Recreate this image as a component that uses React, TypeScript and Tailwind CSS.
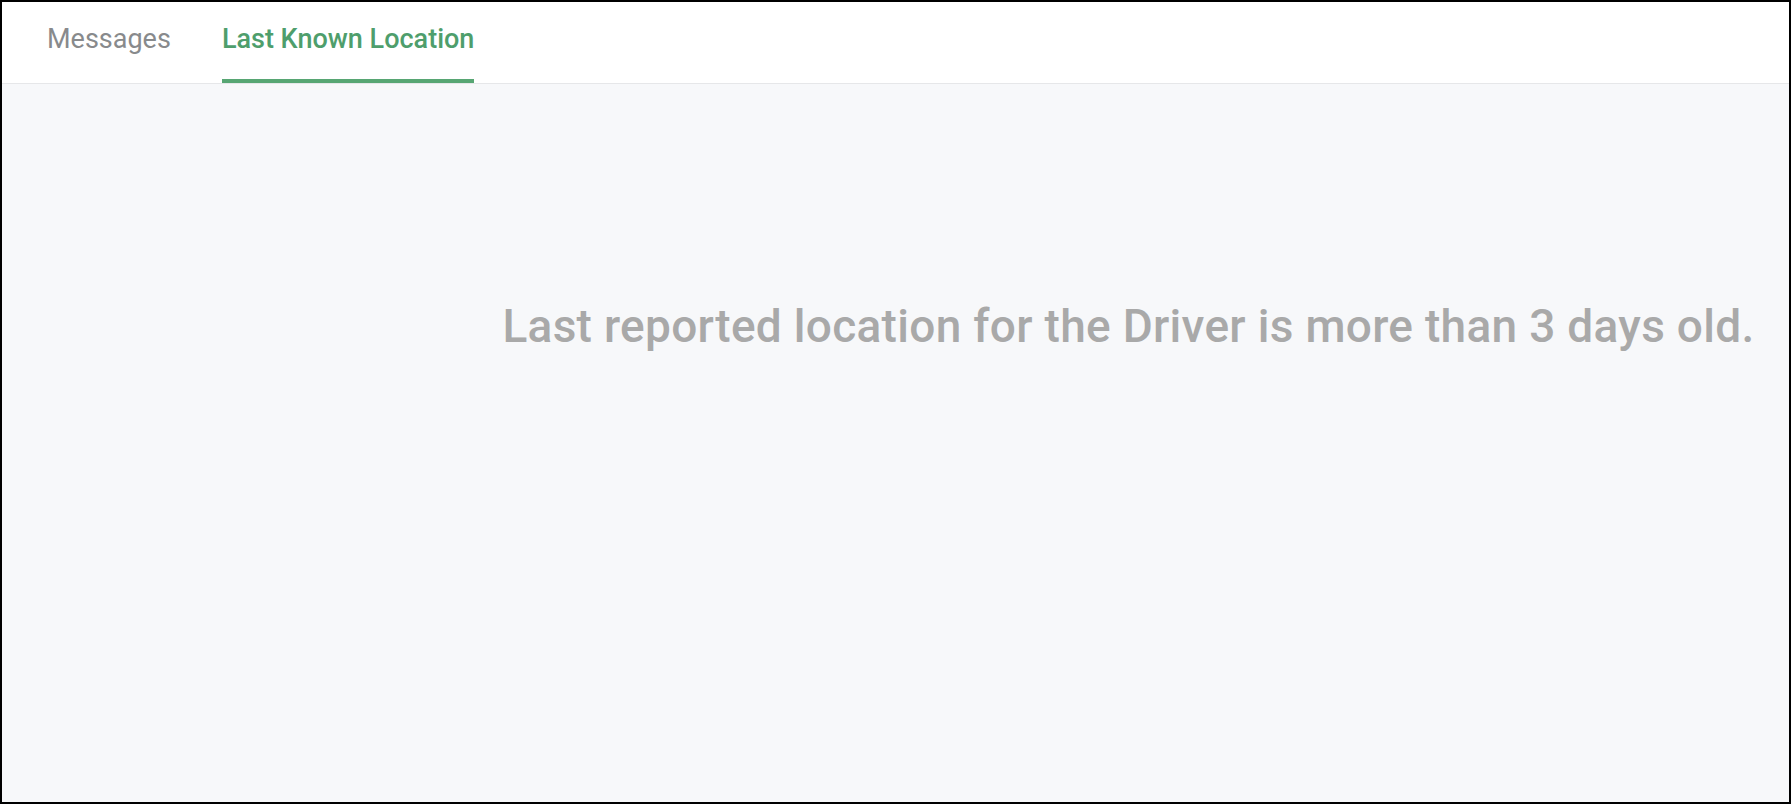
export default function App() {
  const tabs = [
    { label: "Messages", active: false },
    { label: "Last Known Location", active: true },
  ];

  return (
    <div className="flex h-[804px] w-[1791px] flex-col border-2 border-black bg-white font-['Roboto',sans-serif]">
      <div className="flex h-[82px] shrink-0 items-stretch gap-[51px] border-b border-[#e6e7e9] bg-white pl-[45px]">
        {tabs.map((tab) => (
          <div
            key={tab.label}
            className={
              tab.active
                ? "flex items-center border-b-4 border-[#57a673] pb-[2px] text-[27px] font-medium text-[#4e9e6c]"
                : "flex items-center border-b-4 border-transparent pb-[2px] text-[27px] text-[#888a8c]"
            }
          >
            {tab.label}
          </div>
        ))}
      </div>

      <div className="flex flex-1 justify-center bg-[#f7f8fa] pl-[466px] pt-[219px]">
        <p className="text-[46px] font-medium leading-none tracking-[0.3px] text-[#a9a9a9]">
          Last reported location for the Driver is more than 3 days old.
        </p>
      </div>
    </div>
  );
}
